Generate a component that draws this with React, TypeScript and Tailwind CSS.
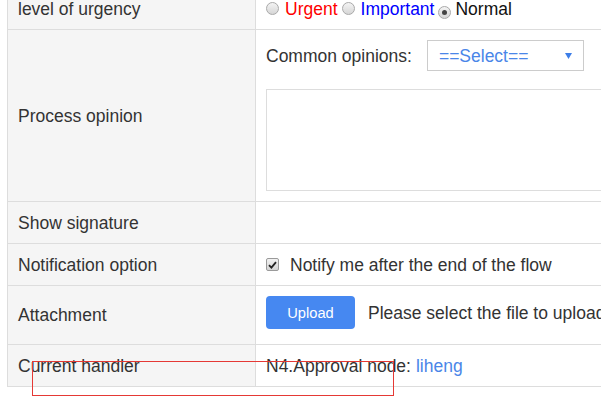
import React from "react";

const font = { fontFamily: '"Liberation Sans", Arial, sans-serif' };

function Radio({ checked }: { checked?: boolean }) {
  return (
    <span className="relative inline-flex h-[13px] w-[13px] shrink-0 items-center justify-center rounded-full border border-[#a9a9a9] bg-gradient-to-b from-[#f4f4f4] to-[#d6d6d6]">
      {checked && <span className="h-[5px] w-[5px] rounded-full bg-[#444]" />}
    </span>
  );
}

function Checkbox() {
  return (
    <span className="inline-flex h-[13px] w-[13px] shrink-0 items-center justify-center rounded-[2px] border border-[#9a9a9a] bg-gradient-to-b from-[#f2f2f2] to-[#d4d4d4]">
      <svg width="9" height="8" viewBox="0 0 9 8">
        <path d="M1 4.2 L3.4 6.6 L8 1.2" stroke="#222" strokeWidth="1.8" fill="none" />
      </svg>
    </span>
  );
}

function Row({ label, h, children, alignTop }: { label: string; h: string; children?: React.ReactNode; alignTop?: boolean }) {
  return (
    <div className={`flex border-b border-[#dddddd] ${h}`}>
      <div className="flex w-[248px] shrink-0 items-center border-r border-[#dddddd] bg-[#f5f5f5] px-[10px] text-[#333]">
        {label}
      </div>
      <div className={`flex flex-1 px-[10px] ${alignTop ? "items-start" : "items-center"}`}>{children}</div>
    </div>
  );
}

export default function App() {
  return (
    <div className="relative h-[400px] w-[601px] overflow-hidden bg-white text-[17.5px] leading-[20px]" style={font}>
      <div className="-mt-[12px] ml-[7px] w-[720px] border-l border-[#dddddd]">
        <Row label="level of urgency" h="h-[42px]">
          <div className="flex items-center">
            <Radio />
            <span className="ml-[6px] text-[#ff0000]">Urgent</span>
            <span className="ml-[4px]"><Radio /></span>
            <span className="ml-[6px] text-[#0000ff]">Important</span>
            <span className="ml-[4px]"><Radio checked /></span>
            <span className="ml-[4px] text-[#111]">Normal</span>
          </div>
        </Row>
        <Row label="Process opinion" h="h-[172px]" alignTop>
          <div className="flex w-full flex-col pt-[10px]">
            <div className="flex items-center">
              <span className="text-[#333]">Common opinions:</span>
              <div className="ml-[15px] flex h-[31px] w-[157px] items-center justify-between border border-[#cccccc] pl-[11px] pr-[11px]">
                <span className="text-[#4a86e8]">==Select==</span>
                <svg width="7" height="6" viewBox="0 0 7 6" className="mt-[1px]">
                  <path d="M0 0 H7 L3.5 6 Z" fill="#3d7ee8" />
                </svg>
              </div>
            </div>
            <div className="mt-[18px] h-[102px] w-[420px] border border-[#dddddd]" />
          </div>
        </Row>
        <Row label="Show signature" h="h-[42px]" />
        <Row label="Notification option" h="h-[42px]">
          <div className="flex items-center">
            <Checkbox />
            <span className="ml-[11px] text-[#333]">Notify me after the end of the flow</span>
          </div>
        </Row>
        <Row label="Attachment" h="h-[59px]" alignTop>
          <div className="mt-[10px] flex items-center">
            <div className="flex h-[33px] w-[89px] items-center justify-center rounded-[4px] bg-[#4688f1] text-[14.7px] text-white">
              Upload
            </div>
            <span className="ml-[13px] whitespace-nowrap text-[#333]">Please select the file to upload</span>
          </div>
        </Row>
        <Row label="Current handler" h="h-[42px]">
          <span className="text-[#333]">N4.Approval node: </span>
          <span className="ml-[5px] text-[#4a86e8]">liheng</span>
        </Row>
      </div>
      <div className="absolute left-[32px] top-[361px] h-[35px] w-[362px] border border-[#e53935]" />
    </div>
  );
}
